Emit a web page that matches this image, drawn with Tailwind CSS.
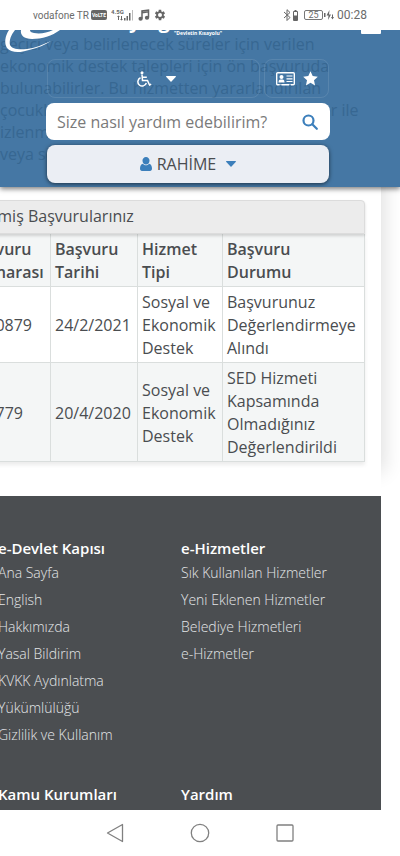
<!DOCTYPE html>
<html lang="tr">
<head>
    <meta charset="UTF-8">
    <meta name="viewport" content="width=device-width, initial-scale=1.0">
    <title>e-Devlet Kapısı</title>
    <script src="https://cdn.jsdelivr.net/npm/@tailwindcss/browser@4"></script>
</head>
<body class="h-screen flex flex-col overflow-hidden bg-white font-['Open_Sans',sans-serif] text-[#4a4d50]">
    <!-- status bar -->
    <div class="h-[30px] shrink-0 flex items-center justify-between pl-[33px] pr-[33px] bg-white font-[Roboto,sans-serif] text-[#6b6b6b]">
        <div class="flex items-center">
            <span class="text-[10px]">vodafone TR</span>
            <span class="ml-[2px] w-4 h-[10px] rounded-[2px] bg-[#666] text-white text-[5px] leading-[10px] font-bold text-center">VoLTE</span>
            <svg class="ml-1 w-[23px] h-3" viewBox="0 0 23 12" fill="#666">
                <text x="0" y="5" font-size="6" font-weight="bold" font-family="Roboto">4.5G</text>
                <path d="M6 8l1.500-1.500L9 8H8v3H7V8zM9 10h1V7h1v3h1l-1.500 1.500zM13 9h1.500v2.500H13zM15.500 7H17v4.500h-1.500zM18 4h1.500v7.500H18z"/>
                <path d="M21 1h1v10.500h-1z" fill="#bbb"/>
            </svg>
            <svg class="ml-1 w-3 h-3" viewBox="0 0 12 12" fill="none" stroke="#666" stroke-width="1.500"><path d="M4 9.500V2l6.500-1v7.500M4 3.800l6.500-1"/><ellipse cx="2.600" cy="9.800" rx="1.400" ry="1.200" fill="#666"/><ellipse cx="9" cy="8.800" rx="1.400" ry="1.200" fill="#666"/></svg>
            <svg class="ml-1 w-3 h-3" viewBox="0 0 24 24" fill="#666"><path d="M19.400 13c.1-.6.1-1.400 0-2l2.600-2-2.500-4.300-3 1.200a8 8 0 0 0-1.700-1L14.400 1.500h-4.900L9 4.900c-.6.3-1.200.6-1.700 1l-3-1.200L1.900 9l2.600 2c-.1.600-.1 1.400 0 2l-2.600 2 2.500 4.300 3-1.200c.5.400 1.100.7 1.700 1l.5 3.400h4.900l.5-3.400c.6-.3 1.200-.6 1.700-1l3 1.200L22 15zM12 16a4 4 0 1 1 0-8 4 4 0 0 1 0 8z"/></svg>
        </div>
        <div class="flex items-center">
            <svg class="w-4 h-3" viewBox="0 0 16 12" fill="none" stroke="#666"><path d="M1 3l6 5.500-3 3V.7l3 2.800L1 9"/><path d="M10.500 2.500h4v9h-4zM11.500 1.500h2"/><path d="M11 7h3v4h-3z" fill="#666"/></svg>
            <span class="ml-[5px] w-[19px] h-[10px] border border-[#777] rounded-[2px] text-[9px] leading-[8px] text-center">25</span>
            <svg class="ml-px w-[10px] h-3" viewBox="0 0 10 12" fill="#666"><path d="M0 4h1.500v4H0zM5.500 1L2.500 6.500h2L4 11l3-5.500H5zM8 5.500h1V8h1l-1.500 2.500L7 8h1z"/></svg>
            <span class="ml-[3px] text-[12px]">00:28</span>
        </div>
    </div>

    <main class="relative flex-1 min-h-0 overflow-hidden">
        <!-- translucent site header over the scrolled page text -->
        <header class="relative z-10 h-[157px] overflow-hidden bg-[#4577a4] shadow-[0_2px_5px_rgba(0,0,0,0.5)]">
            <p class="absolute left-0 top-[3px] text-[16px] leading-[22px] whitespace-nowrap text-[#376792]">geçici veya belirlenecek süreler için verilen<br>ekonomik destek talepleri için ön başvuruda<br>bulunabilirler. Bu hizmetten yararlandırılan<br>çocukların durumları düzenli olarak görevliler ile<br>izlenmekte<br>veya sonl</p>

            <svg class="absolute left-0 top-0 w-[64px] h-6" viewBox="0 0 64 24" fill="#fff">
                <path d="M9 0C5 6 4 13 7 18c4 5 13 5 22 2 9-2 16-5 22-9-9 4-16 7-24 8-9 1-15 0-17-4-1-5 1-10 5-15z"/>
                <path d="M21 0c-1 5 3 9 11 9C42 9 52 6 60 0h-7c-6 3-13 4-19 3-3-.5-4-1.500-4-3z"/>
            </svg>
            <div class="absolute left-[129px] -top-[23px] flex gap-[18px] text-[20px] leading-[28px] font-bold text-white"><span>y</span><span>g</span></div>
            <span class="absolute left-[174px] top-0 text-[5px] leading-[7px] font-bold text-white">"Devletin Kısayolu"</span>
            <button aria-label="Menü" class="absolute right-[19px] top-0 w-5 h-1 rounded-b-[1px] bg-white"></button>

            <div class="relative mr-6 flex justify-center">
                <div class="w-[284px] pt-[29px]">
                    <div class="flex gap-1 px-px">
                        <button aria-label="Erişilebilirlik" class="flex-1 h-[39px] flex items-center justify-center gap-[14px] rounded-lg border border-white/10 pr-3 pl-4">
                            <svg class="w-4 h-4" viewBox="0 0 16 16" fill="none" stroke="#fff" stroke-width="1.500"><circle cx="6" cy="1.700" r="1.500" fill="#fff" stroke="none"/><path d="M6 3.500l.5 6h5l2 4.500 1.700-.8M6.300 6.200h4.500M4.500 6.800A4.300 4.300 0 1 0 10.300 12"/></svg>
                            <svg class="w-[10px] h-[6px]" viewBox="0 0 10 6" fill="#fff"><path d="M.5 0h9q.8.300.2 1L5.500 5.500q-.5.400-1 0L.3 1Q-.3.300.5 0z"/></svg>
                        </button>
                        <button aria-label="Favoriler" class="w-[65px] h-[39px] flex items-center justify-center gap-2 rounded-lg border border-white/10">
                            <svg class="w-[19px] h-[14px]" viewBox="0 0 19 14"><rect x=".7" y=".7" width="17.600" height="12" rx="1" fill="none" stroke="#fff" stroke-width="1.400"/><path d="M2.500 10.500q0-3 2-3h2q2 0 2 3z" fill="#fff"/><circle cx="5.500" cy="5" r="2" fill="#fff"/><path d="M10.500 4h6M10.500 6.800h6M10.500 9.500h6" stroke="#fff" stroke-width="1.200"/><path d="M3.500 12.500h2v1.500h-2zM13 12.500h2v1.500h-2z" fill="#4577a4"/></svg>
                            <svg class="w-[15px] h-[15px]" viewBox="0 0 24 24" fill="#fff"><path d="M12 .5l3.500 7.600 8.200 1-6.100 5.700 1.700 8.200L12 18.900 4.700 23l1.700-8.200L.3 9.100l8.200-1z"/></svg>
                        </button>
                    </div>
                    <form class="mt-[5px] h-[37px] flex items-center rounded-lg bg-white pl-[11px] pr-3">
                        <label for="search" class="sr-only">Arama</label>
                        <input id="search" type="search" placeholder="Size nasıl yardım edebilirim?" class="flex-1 min-w-0 h-full text-[16px] placeholder:text-[#7a7a7a] outline-none">
                        <button type="submit" aria-label="Ara"><svg class="block w-4 h-4" viewBox="0 0 16 16" fill="none" stroke="#3c7fbb" stroke-width="2.200"><circle cx="6.500" cy="6.500" r="5"/><path d="M10.300 10.300l4.500 4.500" stroke-linecap="round"/></svg></button>
                    </form>
                    <button class="mt-[5px] mx-px w-[282px] h-[38px] flex items-center justify-center rounded-lg bg-[#ebeef4] shadow-[0_1px_4px_rgba(0,0,0,0.6)] text-[16px]">
                        <svg class="w-3 h-[14px]" viewBox="0 0 12 14" fill="#3c7fbb"><path d="M6 0a3.500 3.500 0 0 1 3.500 3.800C9.500 6 8 7.500 6 7.500S2.500 6 2.500 3.800A3.500 3.500 0 0 1 6 0zM3 6.800c1.800 2 4.200 2 6 0 2.200.4 3 2.400 3 5 0 1.200-.7 2.200-2 2.200H2c-1.300 0-2-1-2-2.200 0-2.600.8-4.600 3-5z"/></svg>
                        <span class="ml-[5px]">RAHİME</span>
                        <svg class="ml-[10px] w-[10px] h-[6px]" viewBox="0 0 10 6" fill="#3c7fbb"><path d="M.5 0h9q.8.300.2 1L5.500 5.500q-.5.400-1 0L.3 1Q-.3.300.5 0z"/></svg>
                    </button>
                </div>
            </div>
        </header>

        <!-- page card, scrolled to the right -->
        <div class="-ml-9 mr-[19px] h-[309px] bg-white pt-[13px] pr-4 shadow-[4px_-24px_18px_rgba(0,0,0,0.12)]">
            <table class="w-full table-fixed border-separate border-spacing-0 text-[16px] leading-[23px] text-left shadow-[0_3px_4px_rgba(0,0,0,0.08)]">
                <caption class="relative h-[34px] rounded-t-[4px] border border-[#dcdcdc] bg-[#ececec] shadow-[0_2px_3px_rgba(0,0,0,0.15)] pl-1 text-left text-[16px] leading-[31px]">Geçmiş Başvurularınız</caption>
                <colgroup>
                    <col class="w-[87px]">
                    <col class="w-[87px]">
                    <col class="w-[85px]">
                    <col>
                </colgroup>
                <thead class="bg-[#f4f6f6]">
                    <tr class="*:border-r *:border-b *:border-[#dadedd] *:pl-1 *:pt-1 *:pb-[2px] *:font-semibold">
                        <th>Başvuru<br>Numarası</th>
                        <th>Başvuru<br>Tarihi</th>
                        <th>Hizmet<br>Tipi</th>
                        <th>Başvuru<br>Durumu</th>
                    </tr>
                </thead>
                <tbody>
                    <tr class="*:border-r *:border-b *:border-[#dadedd] *:pl-1 *:pt-1 *:pb-[2px]">
                        <td class="text-right pr-[18px]">0879</td>
                        <td>24/2/2021</td>
                        <td>Sosyal ve<br>Ekonomik<br>Destek</td>
                        <td>Başvurunuz<br>Değerlendirmeye<br>Alındı</td>
                    </tr>
                    <tr class="bg-[#f4f6f6] *:border-r *:border-b *:border-[#dadedd] *:pl-1 *:pt-1 *:pb-[2px]">
                        <td class="text-right pr-[27px]">779</td>
                        <td>20/4/2020</td>
                        <td>Sosyal ve<br>Ekonomik<br>Destek</td>
                        <td>SED Hizmeti<br>Kapsamında<br>Olmadığınız<br>Değerlendirildi</td>
                    </tr>
                </tbody>
            </table>
        </div>

        <footer class="relative -ml-[2px] mr-[19px] h-full grid grid-cols-[183px_1fr] content-start gap-y-9 bg-[#4b4e51] pt-[42px] text-[14px] text-[#e4e6e8]">
            <div>
                <h2 class="text-[15px] leading-5 font-semibold text-white">e-Devlet Kapısı</h2>
                <ul class="pt-px font-light leading-[27px]">
                    <li><a href="#">Ana Sayfa</a></li>
                    <li><a href="#">English</a></li>
                    <li><a href="#">Hakkımızda</a></li>
                    <li><a href="#">Yasal Bildirim</a></li>
                    <li><a href="#">KVKK Aydınlatma</a></li>
                    <li><a href="#">Yükümlülüğü</a></li>
                    <li><a href="#">Gizlilik ve Kullanım</a></li>
                </ul>
            </div>
            <div>
                <h2 class="text-[15px] leading-5 font-semibold text-white">e-Hizmetler</h2>
                <ul class="pt-px font-light leading-[27px]">
                    <li><a href="#">Sık Kullanılan Hizmetler</a></li>
                    <li><a href="#">Yeni Eklenen Hizmetler</a></li>
                    <li><a href="#">Belediye Hizmetleri</a></li>
                    <li><a href="#">e-Hizmetler</a></li>
                </ul>
            </div>
            <h2 class="text-[15px] leading-5 font-semibold text-white">Kamu Kurumları</h2>
            <h2 class="text-[15px] leading-5 font-semibold text-white">Yardım</h2>
        </footer>
    </main>

    <!-- Android navigation -->
    <nav class="relative h-[46px] shrink-0 flex items-center justify-center gap-[66px] bg-white">
        <button aria-label="Geri"><svg class="block w-[18px] h-5" viewBox="0 0 18 20" fill="none" stroke="#808080" stroke-width="1.300" stroke-linejoin="round"><path d="M16.500 1.500v17L1.500 10z"/></svg></button>
        <button aria-label="Ana ekran"><svg class="block w-5 h-5" viewBox="0 0 20 20" fill="none" stroke="#808080" stroke-width="1.300"><circle cx="10" cy="10" r="8.700"/></svg></button>
        <button aria-label="Son uygulamalar"><svg class="block w-[18px] h-[18px]" viewBox="0 0 18 18" fill="none" stroke="#808080" stroke-width="1.300"><rect x="1" y="1" width="16" height="16" rx="1"/></svg></button>
    </nav>
</body>
</html>
